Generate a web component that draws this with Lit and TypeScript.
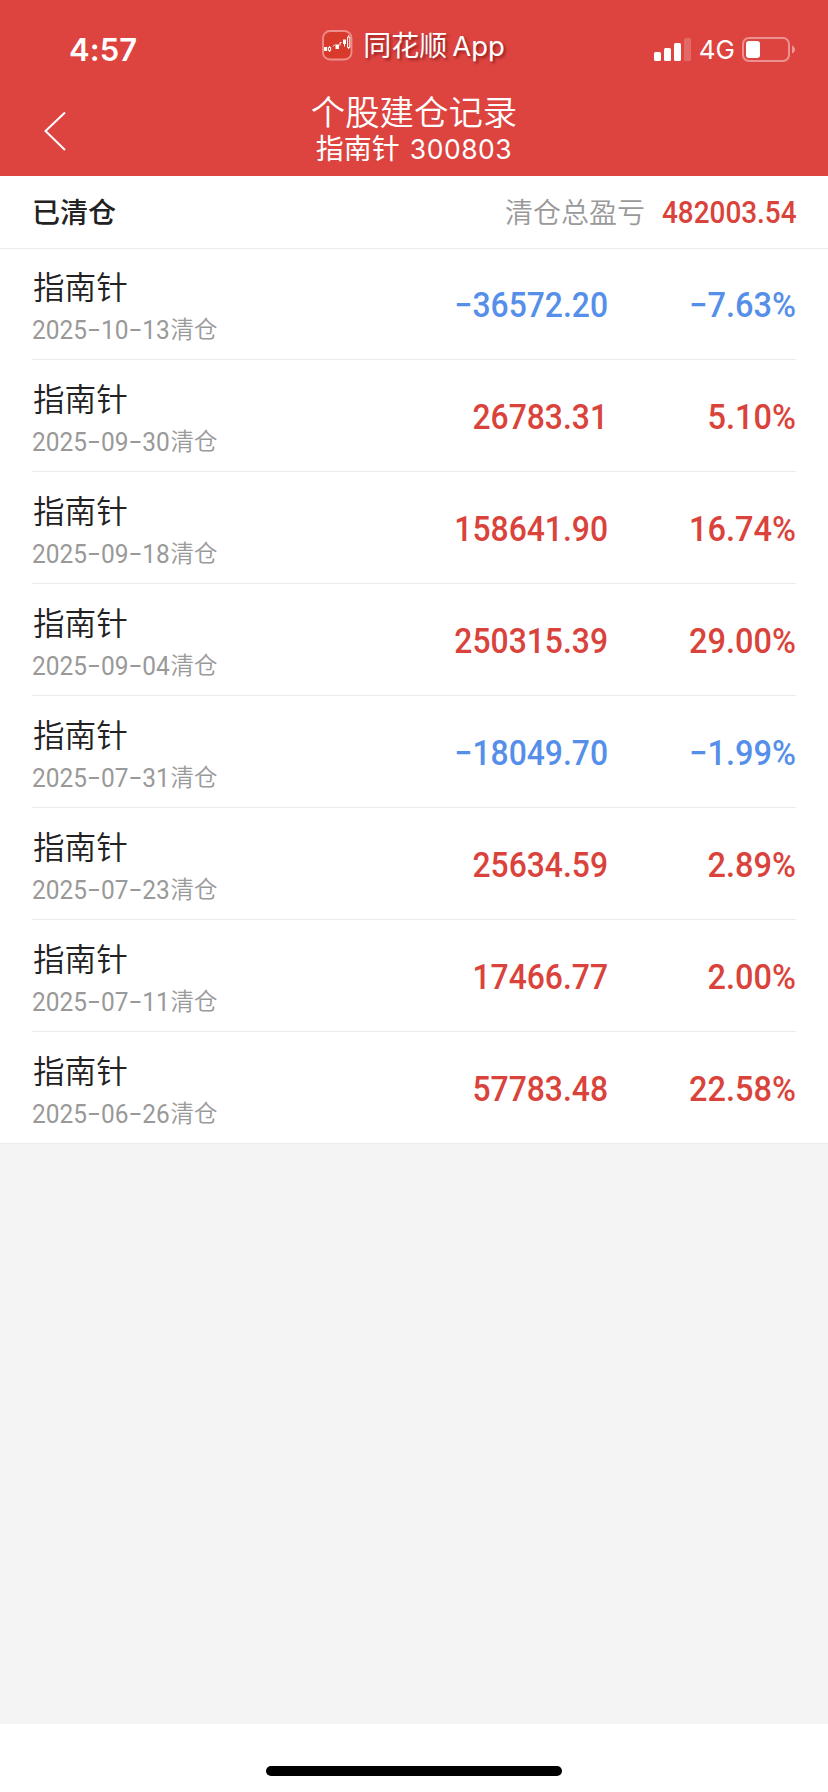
import { LitElement, html, css, svg } from "lit";
import { customElement } from "lit/decorators.js";

interface Rec { date: string; amount: string; rate: string; }

const RECORDS: Rec[] = [
  { date: "2025−10−13", amount: "−36572.20", rate: "−7.63%" },
  { date: "2025−09−30", amount: "26783.31", rate: "5.10%" },
  { date: "2025−09−18", amount: "158641.90", rate: "16.74%" },
  { date: "2025−09−04", amount: "250315.39", rate: "29.00%" },
  { date: "2025−07−31", amount: "−18049.70", rate: "−1.99%" },
  { date: "2025−07−23", amount: "25634.59", rate: "2.89%" },
  { date: "2025−07−11", amount: "17466.77", rate: "2.00%" },
  { date: "2025−06−26", amount: "57783.48", rate: "22.58%" },
];

@customElement("app-root")
export class AppRoot extends LitElement {
  static styles = css`
    :host { display: flex; flex-direction: column; width: 828px; height: 1792px; background: #f4f4f4;
      font-family: Inter, "Noto Sans CJK SC", sans-serif; color: #222; overflow: hidden; }
    * { box-sizing: border-box; }
    .top { height: 176px; flex: none; background: #dd4440; color: #fff; display: flex; flex-direction: column; }
    .status { height: 92px; display: grid; grid-template-columns: 1fr auto 1fr; }
    .time { padding: 31px 0 0 69px; font-size: 31px; line-height: 38px; font-weight: 600; letter-spacing: 0.1px; }
    .brand { display: flex; height: 34px; margin-top: 28px; align-items: center; text-shadow: 2px 2px 3px rgba(90, 0, 0, .55); }
    .brand svg { display: block; margin-right: 10px; }
    .brand .cn { font-size: 28px; line-height: 34px; padding-top: 1px; }
    .brand .en { font-size: 27.5px; line-height: 34px; margin: 0 1px 0 5px; padding-top: 1px; }
    .signals { display: flex; justify-content: flex-end; padding: 36px 33px 0 0; height: 64px; }
    .signals svg { display: block; flex: none; }
    .net { font-size: 26px; line-height: 28px; margin: 0 6px 0 7px; }
    .nav { display: grid; grid-template-columns: 100px 1fr 100px; height: 84px; }
    .back { padding: 18px 0 0 43px; }
    .back svg { display: block; }
    .titles { display: flex; flex-direction: column; align-items: center; padding-top: 1px; }
    .title { font-size: 34.4px; line-height: 40px; font-weight: 350; }
    .sub { font-size: 28px; line-height: 32px; display: flex; gap: 10px; }
    .sub .code { font-size: 26.5px; letter-spacing: .5px; }
    .summary { flex: none; height: 73px; background: #fff; border-bottom: 1px solid #ebebeb; display: flex; align-items: center;
      padding: 2px 32px 0; font-size: 28px; line-height: 40px; }
    .closed { font-weight: 500; flex: 1; }
    .label { color: #999; font-weight: 350; }
    .num { font-family: Roboto, sans-serif; font-weight: 500; white-space: nowrap; transform-origin: right center; transform: scaleX(.91); text-align: right; }
    .num.rate { transform: scaleX(.93); }
    .total { width: 151px; font-size: 31px; display: flex; justify-content: flex-end; }
    .total .num { transform: scaleX(.9); margin-right: -1px; }
    .up { color: #d9433b; }
    .down { color: #568fea; }
    .list { flex: none; background: #fff; padding: 0 32px; border-bottom: 1px solid #ebebeb; }
    .row { display: grid; grid-template-columns: 1fr 240px 188px; height: 112px; border-bottom: 1px solid #ebebeb; }
    .row:first-child { height: 111px; }
    .row:first-child .info, .row:first-child .num { margin-top: -1px; }
    .row:last-child { border-bottom: 0; height: 111px; }
    .info { padding-top: 21px; }
    .name { font-size: 31.6px; line-height: 38px; padding-left: 1px; font-weight: 350; }
    .date { font-size: 23.5px; line-height: 34px; color: #999; font-weight: 350; margin-top: 6px; display: flex; }
    .day { font-family: Roboto, sans-serif; font-weight: 400; font-size: 26px; width: 138.5px; transform: scaleX(.94); transform-origin: left center; white-space: nowrap; }
    .row .num { font-size: 35px; line-height: 116px; height: 110px; }
    .foot { margin-top: auto; height: 68px; background: #fff; display: flex; justify-content: center; padding-top: 42px; }
    .bar { width: 296px; height: 10px; border-radius: 5px; background: #000; }
  `;

  private logo() {
    return svg`<svg width="31" height="31" viewBox="0 0 31 31">
      <rect x="1" y="1" width="28.500" height="28.500" rx="7" fill="#d83a2c" stroke="#ee8f8a" stroke-width="1.8"/>
      <g fill="#fff"><rect x="2" y="17" width="3.200" height="4"/><rect x="13.500" y="14.500" width="3.500" height="4.500"/><rect x="21" y="9.500" width="3" height="4.500"/></g>
      <g fill="none" stroke="#fff" stroke-width="1"><path d="M6.500 17.500h2.200v3H6.500zM7.600 16v1.500M7.600 20.500V22M11 16.500l2-2M18 15.500v-3h1.500M22.500 14v2.500M25.600 7h2.200v10.500h-2.200zM26.700 5v2M26.700 17.500v1.500"/></g>
    </svg>`;
  }

  render() {
    return html`
      <header class="top">
        <div class="status">
          <div class="time">4:57</div>
          <div class="brand">${this.logo()}<span class="cn">同花顺</span><span class="en">App</span></div>
          <div class="signals">
            <svg width="38" height="28" viewBox="0 0 38 28" fill="#fff">
              <rect x="0" y="16" width="7" height="9" rx="1.600"/><rect x="10" y="12" width="7" height="13" rx="1.600"/>
              <rect x="20" y="7" width="7" height="18" rx="1.600"/><rect x="30" y="2" width="7" height="23" rx="1.600" opacity=".2"/>
            </svg>
            <span class="net">4G</span>
            <svg width="54" height="28" viewBox="0 0 54 28">
              <rect x="2" y="2" width="46" height="23" rx="6" fill="none" stroke="#fff" stroke-opacity=".42" stroke-width="2"/>
              <rect x="5" y="5" width="14" height="17" rx="3" fill="#fff"/>
              <path d="M51 9.500c4 1.500 4 6.500 0 8z" fill="#fff" fill-opacity=".45"/>
            </svg>
          </div>
        </div>
        <div class="nav">
          <div class="back"><svg width="26" height="42" viewBox="0 0 26 42"><path d="M22 2.500L2.500 21L22 40" fill="none" stroke="#fff" stroke-width="2"/></svg></div>
          <div class="titles">
            <div class="title">个股建仓记录</div>
            <div class="sub"><span>指南针</span><span class="code">300803</span></div>
          </div>
        </div>
      </header>
      <section class="summary">
        <span class="closed">已清仓</span><span class="label">清仓总盈亏</span>
        <span class="total"><span class="num up">482003.54</span></span>
      </section>
      <section class="list">
        ${RECORDS.map((r) => {
          const tone = r.amount.startsWith("−") ? "down" : "up";
          return html`<div class="row">
            <div class="info"><div class="name">指南针</div><div class="date"><span class="day">${r.date}</span><span>清仓</span></div></div>
            <div class="num ${tone}">${r.amount}</div>
            <div class="num rate ${tone}">${r.rate}</div>
          </div>`;
        })}
      </section>
      <footer class="foot"><div class="bar"></div></footer>
    `;
  }
}
